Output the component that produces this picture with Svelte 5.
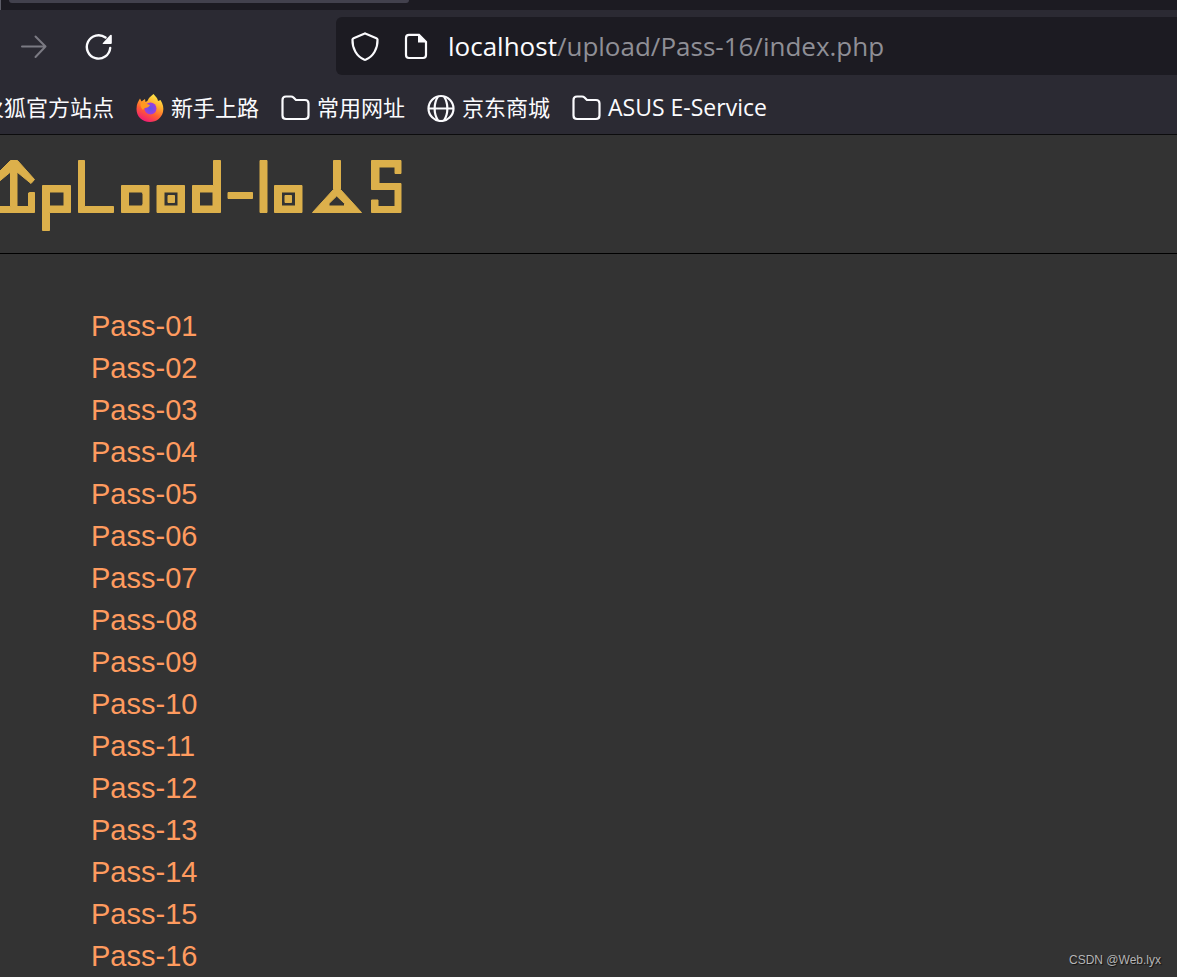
<script>
  const bookmarks = [
    { label: '火狐官方站点', icon: '' },
    { label: '新手上路', icon: 'firefox' },
    { label: '常用网址', icon: 'folder' },
    { label: '京东商城', icon: 'globe' },
    { label: 'ASUS E-Service', icon: 'folder', latin: true }
  ];
  const passes = Array.from({ length: 16 }, (_, i) => `Pass-${String(i + 1).padStart(2, '0')}`);
</script>

<div class="window">
  <div class="tabs"><div class="tab"></div></div>
  <div class="toolbar">
    <button class="forward" aria-label="Forward" disabled>
      <svg width="28" height="30" viewBox="0 -2 28 30" fill="none" stroke="#7b7a83" stroke-width="2" stroke-linecap="round" stroke-linejoin="round"><path d="M2 13.500H25.500M15.500 3.500L25.500 13.500L15.500 24" /></svg>
    </button>
    <button class="reload" aria-label="Reload">
      <svg width="28" height="30" viewBox="0 -2 28 30"><path d="M20.500 4.500A11.700 11.700 0 1 0 25.200 15" fill="none" stroke="#fbfbfe" stroke-width="2.400" stroke-linecap="round" /><path d="M26.800 2.500V10Q26.800 11 25.800 11H18.100Q17.100 10.800 17.900 9.900L25.200 2.100Q26.500 1.300 26.800 2.500Z" fill="#fbfbfe" /></svg>
    </button>
    <div class="address">
      <svg width="30" height="32" viewBox="0 0 30 32" fill="none" stroke="#fbfbfe" stroke-width="2.200" stroke-linejoin="round"><path d="M14.200 3.700Q15 3.200 15.800 3.700L26.400 8.200Q27.500 8.700 27.500 9.900C27.800 18.500 23.300 26.500 16 29.600Q15 30.200 14 29.600C6.700 26.500 2.200 18.500 2.500 9.900Q2.500 8.700 3.600 8.200Z" /></svg>
      <svg width="24" height="28" viewBox="0 0 24 28"><path d="M5 2.900H15L22 9.900V23Q22 26 19 26H5Q2 26 2 23V5.900Q2 2.900 5 2.900Z" fill="none" stroke="#fbfbfe" stroke-width="2.200" /><path d="M14 2.500V10.500H23L15 2.500Z" fill="#fbfbfe" /></svg>
      <span class="url"><b>localhost</b>/upload/Pass-16/index.php</span>
    </div>
  </div>
  <nav class="bookmarks">
    {#each bookmarks as item}
      <a href="#top">
        {#if item.icon === 'firefox'}
          <svg width="28" height="30" viewBox="0 0 28 30">
            <defs>
              <linearGradient id="flame" x1="0.800" y1="0" x2="0.300" y2="1"><stop offset="0" stop-color="#fff44f" /><stop offset="0.350" stop-color="#ffb02e" /><stop offset="0.650" stop-color="#ff6030" /><stop offset="1" stop-color="#f0167a" /></linearGradient>
              <radialGradient id="core"><stop offset="0" stop-color="#5b55e8" /><stop offset="1" stop-color="#a13cdd" /></radialGradient>
            </defs>
            <path d="M17.500 1C20 4 21.500 5 22 8L24.500 7C27 11 28 15 27 19C25.500 25 20.500 29 14 29C6 29 .5 23.500 .5 16C.5 11 2.500 8 4 5.500L5.500 8.500L9 6L9.500 9Q12 8 13 5Q15 3 17.500 1Z" fill="url(#flame)" />
            <circle cx="14.500" cy="15.500" r="6" fill="url(#core)" />
            <path d="M5.500 8.500Q8 8.500 9.500 10.500L14 12Q12.500 15 8.500 15L7 17Q3 13 5.500 8.500Z" fill="#ff9820" />
          </svg>
        {:else if item.icon === 'folder'}
          <svg width="29" height="28" viewBox="0 0 29 28" fill="none" stroke="#fbfbfe" stroke-width="2.200" stroke-linejoin="round"><path d="M5 2.500H10Q11.500 2.500 12.500 3.500L15 6H24Q27.500 6 27.500 9.500V21.500Q27.500 25 24 25H5Q1.500 25 1.500 21.500V6Q1.500 2.500 5 2.500Z" /></svg>
        {:else if item.icon === 'globe'}
          <svg width="28" height="28" viewBox="0 0 28 28" fill="none" stroke="#fbfbfe" stroke-width="2.200"><circle cx="14" cy="14.500" r="12.500" /><path d="M1.500 14.500H26.500M11 2.500C6.500 9.500 6.500 19.500 11 26.500M17 2.500C21.500 9.500 21.500 19.500 17 26.500" /></svg>
        {/if}
        <span class:latin={item.latin}>{item.label}</span>
      </a>
    {/each}
  </nav>
</div>

<header id="top">
  <svg width="404" height="74" viewBox="0 158 404 74" role="img" aria-label="Upload-labs" fill="#dcb04b" fill-rule="evenodd" stroke="#dcb04b" stroke-width="1" stroke-linejoin="round">
    <path d="M10.500 160.500H17.500L34.500 179.500L31 183.500L17 172V206.500H28.500V193L30 192.500H34.500V212.500H-5V206.500H10.500V172L-4 184V175Z" />
    <path d="M42.500 185.500H70.500V212.500H49.500V230.500H42.500ZM49.500 192V206H64V192Z" />
    <path d="M78.500 160.500H84.500V206.500H113.500V212.500H78.500Z" />
    <path d="M121.500 185.500H149V212.500H121.500ZM128.500 192V206H142L143 204V194L142 192Z" />
    <path d="M157 185.500H184.500V212.500H157ZM164 192V206H178V192ZM168 195.500H174.500V202.500H168Z" />
    <path d="M192.500 185.500H213.500V160.500H220.500V212.500H192.500ZM199.500 192V206H213V192Z" />
    <path d="M228 192.500H252.500V198.500H228Z" />
    <path d="M260 160.500H267V212.500H260Z" />
    <path d="M274.500 185.500H302V212.500H274.500ZM281.500 192V206H295.500V192ZM285 195.500H291.500V202.500H285Z" />
    <path d="M333.500 160.500H340.500V189.500L361.500 212.500H312.500L333.500 189.500ZM336.700 196L329 203.500V206H344.500V203.500Z" />
    <path d="M371.500 160.500H401V173.500H395V167H379V183.500H401V212.500H371.500V200H378V206.500H395V189.500H371.500Z" />
  </svg>
</header>

<main>
  <ul>
    {#each passes as pass}
      <li><a href="#top">{pass}</a></li>
    {/each}
  </ul>
  <div class="watermark">CSDN @Web.lyx</div>
</main>

<style>
  :global(body) {
    margin: 0;
    background: #333;
    overflow: hidden;
  }
  .window {
    background: #2b2a33;
    color: #fbfbfe;
    border-bottom: 1px solid #0c0c0d;
    overflow: hidden;
    font-family: "Open Sans", "Noto Sans CJK SC", sans-serif;
  }
  .tabs {
    height: 10px;
    background: #1c1b22;
    border-left: 1px solid #5b5b66;
    box-sizing: border-box;
  }
  .tab {
    width: 400px;
    height: 3px;
    margin-left: 8px;
    background: #42414d;
    border-radius: 0 0 6px 6px;
  }
  .toolbar {
    display: flex;
    align-items: center;
    padding: 7px 0 7px 20px;
  }
  button {
    padding: 0;
    border: 0;
    background: none;
  }
  svg {
    display: block;
    flex: none;
  }
  .reload {
    margin-left: 37px;
  }
  .address {
    flex: 1;
    display: flex;
    align-items: center;
    height: 58px;
    margin-left: 223px;
    padding-left: 14px;
    background: #1c1b22;
    border-radius: 6px 0 0 6px;
  }
  .address svg + svg {
    margin-left: 24px;
  }
  .url {
    margin-left: 20px;
    font-size: 26px;
    line-height: 36px;
    color: #8f8f96;
    white-space: nowrap;
  }
  .url b {
    font-weight: 400;
    color: #fbfbfe;
  }
  .bookmarks {
    display: flex;
    gap: 22px;
    height: 52px;
    margin-left: -18px;
    align-items: center;
    white-space: nowrap;
  }
  .bookmarks a {
    display: flex;
    align-items: center;
    gap: 7px;
    color: inherit;
    text-decoration: none;
    font-size: 22px;
    line-height: 32px;
  }
  .bookmarks span {
    padding-bottom: 2px;
  }
  .bookmarks .latin {
    font-size: 23px;
  }
  header {
    padding: 23px 0 21px;
    border-bottom: 1px solid #000;
  }
  main {
    font-family: "Liberation Sans", Arial, sans-serif;
    position: relative;
  }
  ul {
    list-style: none;
    margin: 0;
    padding: 51px 0 0 91px;
  }
  li {
    font-size: 29px;
    line-height: 42px;
  }
  li a {
    color: #ff9b5f;
    text-decoration: none;
  }
  .watermark {
    position: absolute;
    right: 16px;
    bottom: 9px;
    font-size: 12px;
    line-height: 16px;
    color: #b5b5b5;
    text-shadow: 1px 1px 1px #111;
  }
</style>
